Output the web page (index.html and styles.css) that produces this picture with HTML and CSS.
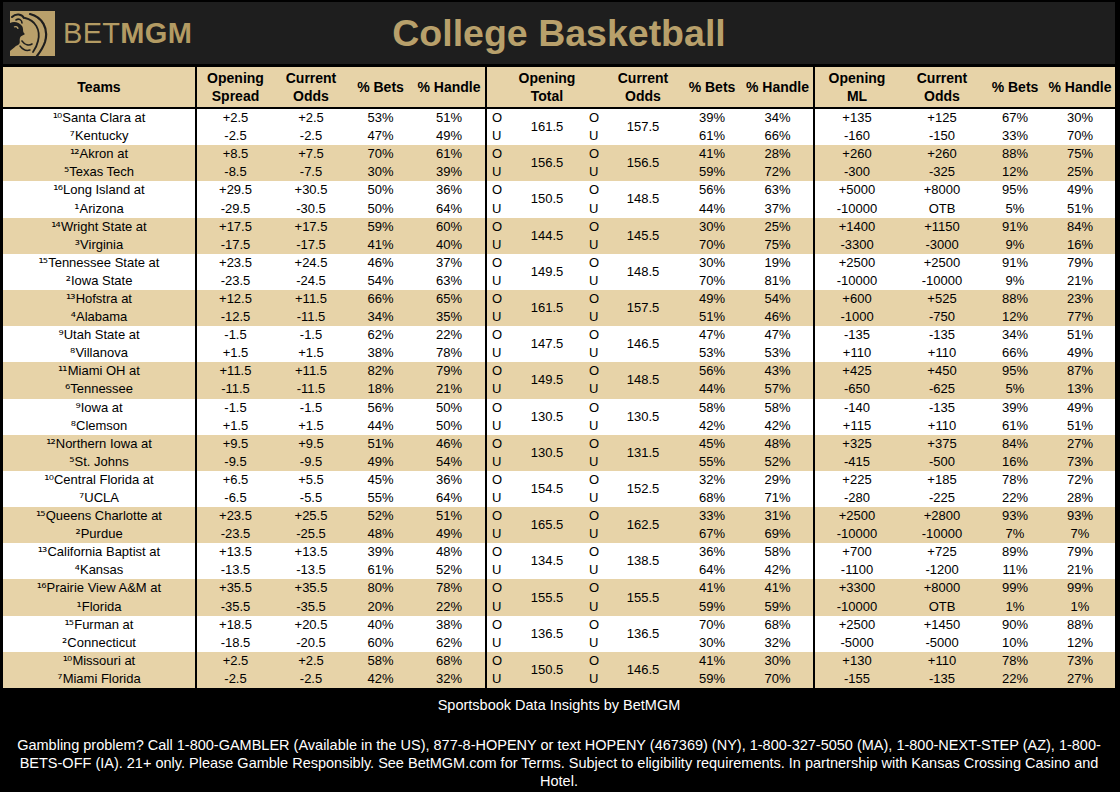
FILE: index.html
```html
<!DOCTYPE html>
<html lang="en">
<head>
<meta charset="utf-8">
<title>College Basketball - BetMGM</title>
<link rel="stylesheet" href="styles.css">
</head>
<body>
<div class="page">
  <header class="topbar">
    <div class="brand">
      <svg class="lion" width="45" height="45" viewBox="0 0 45 45" aria-hidden="true">
        <rect x="0" y="0" width="45" height="45" fill="#b9a06b"/>
        <g fill="none" stroke="#1e1e1e" stroke-linecap="round">
          <path d="M20 3 C32 6 39 17 35 31 C33 37 30 41 27 45" stroke-width="2.2"/>
          <path d="M15 7 C25 9 31 19 28 30 C27 35 25 38 23 41" stroke-width="1.8"/>
          <path d="M2 6 C6 2 12 3 14 7" stroke-width="2"/>
          <path d="M6 9 C9 7 12 9 12 12" stroke-width="1.6"/>
          <path d="M12 30 C15 34 19 35 22 33" stroke-width="1.6"/>
          <path d="M10 35 C13 39 17 40 20 39" stroke-width="1.4"/>
        </g>
        <path d="M0 12 C4 10 9 11 12 15 C14 18 12 21 15 23 C13 25 11 24 10 27 C9 30 11 32 8 34 C5 35 3 38 0 40 Z" fill="#1e1e1e"/>
        <path d="M4 16 C6 15 8 16 8 18" fill="none" stroke="#b9a06b" stroke-width="1.2"/>
      </svg>
      <div class="wordmark"><span class="bet">BET</span><span class="mgm">MGM</span></div>
    </div>
    <h1 class="title">College Basketball</h1>
    <div class="spacer"></div>
  </header>

  <table class="grid">
    <colgroup>
      <col style="width:194px"><col style="width:77px"><col style="width:74px"><col style="width:65px"><col style="width:74px">
      <col style="width:21px"><col style="width:78px"><col style="width:18px"><col style="width:78px"><col style="width:60px"><col style="width:73px">
      <col style="width:84px"><col style="width:86px"><col style="width:60px"><col style="width:70px">
    </colgroup>
    <thead>
      <tr>
        <th class="sep">Teams</th>
        <th>Opening<br>Spread</th><th>Current<br>Odds</th><th>% Bets</th><th class="sep">% Handle</th>
        <th></th><th>Opening<br>Total</th><th></th><th>Current<br>Odds</th><th>% Bets</th><th class="sep">% Handle</th>
        <th>Opening<br>ML</th><th>Current<br>Odds</th><th>% Bets</th><th>% Handle</th>
      </tr>
    </thead>
    <tbody>
      <tr class="w"><td class="sep"><span class="seed">¹⁰</span>Santa Clara at</td><td>+2.5</td><td>+2.5</td><td>53%</td><td class="sep">51%</td><td class="ou">O</td><td rowspan="2">161.5</td><td class="ou2">O</td><td rowspan="2">157.5</td><td>39%</td><td class="sep">34%</td><td>+135</td><td>+125</td><td>67%</td><td>30%</td></tr>
      <tr class="w"><td class="sep"><span class="seed">⁷</span>Kentucky</td><td>-2.5</td><td>-2.5</td><td>47%</td><td class="sep">49%</td><td class="ou">U</td><td class="ou2">U</td><td>61%</td><td class="sep">66%</td><td>-160</td><td>-150</td><td>33%</td><td>70%</td></tr>

      <tr class="t"><td class="sep"><span class="seed">¹²</span>Akron at</td><td>+8.5</td><td>+7.5</td><td>70%</td><td class="sep">61%</td><td class="ou">O</td><td rowspan="2">156.5</td><td class="ou2">O</td><td rowspan="2">156.5</td><td>41%</td><td class="sep">28%</td><td>+260</td><td>+260</td><td>88%</td><td>75%</td></tr>
      <tr class="t"><td class="sep"><span class="seed">⁵</span>Texas Tech</td><td>-8.5</td><td>-7.5</td><td>30%</td><td class="sep">39%</td><td class="ou">U</td><td class="ou2">U</td><td>59%</td><td class="sep">72%</td><td>-300</td><td>-325</td><td>12%</td><td>25%</td></tr>

      <tr class="w"><td class="sep"><span class="seed">¹⁶</span>Long Island at</td><td>+29.5</td><td>+30.5</td><td>50%</td><td class="sep">36%</td><td class="ou">O</td><td rowspan="2">150.5</td><td class="ou2">O</td><td rowspan="2">148.5</td><td>56%</td><td class="sep">63%</td><td>+5000</td><td>+8000</td><td>95%</td><td>49%</td></tr>
      <tr class="w"><td class="sep"><span class="seed">¹</span>Arizona</td><td>-29.5</td><td>-30.5</td><td>50%</td><td class="sep">64%</td><td class="ou">U</td><td class="ou2">U</td><td>44%</td><td class="sep">37%</td><td>-10000</td><td>OTB</td><td>5%</td><td>51%</td></tr>

      <tr class="t"><td class="sep"><span class="seed">¹⁴</span>Wright State at</td><td>+17.5</td><td>+17.5</td><td>59%</td><td class="sep">60%</td><td class="ou">O</td><td rowspan="2">144.5</td><td class="ou2">O</td><td rowspan="2">145.5</td><td>30%</td><td class="sep">25%</td><td>+1400</td><td>+1150</td><td>91%</td><td>84%</td></tr>
      <tr class="t"><td class="sep"><span class="seed">³</span>Virginia</td><td>-17.5</td><td>-17.5</td><td>41%</td><td class="sep">40%</td><td class="ou">U</td><td class="ou2">U</td><td>70%</td><td class="sep">75%</td><td>-3300</td><td>-3000</td><td>9%</td><td>16%</td></tr>

      <tr class="w"><td class="sep"><span class="seed">¹⁵</span>Tennessee State at</td><td>+23.5</td><td>+24.5</td><td>46%</td><td class="sep">37%</td><td class="ou">O</td><td rowspan="2">149.5</td><td class="ou2">O</td><td rowspan="2">148.5</td><td>30%</td><td class="sep">19%</td><td>+2500</td><td>+2500</td><td>91%</td><td>79%</td></tr>
      <tr class="w"><td class="sep"><span class="seed">²</span>Iowa State</td><td>-23.5</td><td>-24.5</td><td>54%</td><td class="sep">63%</td><td class="ou">U</td><td class="ou2">U</td><td>70%</td><td class="sep">81%</td><td>-10000</td><td>-10000</td><td>9%</td><td>21%</td></tr>

      <tr class="t"><td class="sep"><span class="seed">¹³</span>Hofstra at</td><td>+12.5</td><td>+11.5</td><td>66%</td><td class="sep">65%</td><td class="ou">O</td><td rowspan="2">161.5</td><td class="ou2">O</td><td rowspan="2">157.5</td><td>49%</td><td class="sep">54%</td><td>+600</td><td>+525</td><td>88%</td><td>23%</td></tr>
      <tr class="t"><td class="sep"><span class="seed">⁴</span>Alabama</td><td>-12.5</td><td>-11.5</td><td>34%</td><td class="sep">35%</td><td class="ou">U</td><td class="ou2">U</td><td>51%</td><td class="sep">46%</td><td>-1000</td><td>-750</td><td>12%</td><td>77%</td></tr>

      <tr class="w"><td class="sep"><span class="seed">⁹</span>Utah State at</td><td>-1.5</td><td>-1.5</td><td>62%</td><td class="sep">22%</td><td class="ou">O</td><td rowspan="2">147.5</td><td class="ou2">O</td><td rowspan="2">146.5</td><td>47%</td><td class="sep">47%</td><td>-135</td><td>-135</td><td>34%</td><td>51%</td></tr>
      <tr class="w"><td class="sep"><span class="seed">⁸</span>Villanova</td><td>+1.5</td><td>+1.5</td><td>38%</td><td class="sep">78%</td><td class="ou">U</td><td class="ou2">U</td><td>53%</td><td class="sep">53%</td><td>+110</td><td>+110</td><td>66%</td><td>49%</td></tr>

      <tr class="t"><td class="sep"><span class="seed">¹¹</span>Miami OH at</td><td>+11.5</td><td>+11.5</td><td>82%</td><td class="sep">79%</td><td class="ou">O</td><td rowspan="2">149.5</td><td class="ou2">O</td><td rowspan="2">148.5</td><td>56%</td><td class="sep">43%</td><td>+425</td><td>+450</td><td>95%</td><td>87%</td></tr>
      <tr class="t"><td class="sep"><span class="seed">⁶</span>Tennessee</td><td>-11.5</td><td>-11.5</td><td>18%</td><td class="sep">21%</td><td class="ou">U</td><td class="ou2">U</td><td>44%</td><td class="sep">57%</td><td>-650</td><td>-625</td><td>5%</td><td>13%</td></tr>

      <tr class="w"><td class="sep"><span class="seed">⁹</span>Iowa at</td><td>-1.5</td><td>-1.5</td><td>56%</td><td class="sep">50%</td><td class="ou">O</td><td rowspan="2">130.5</td><td class="ou2">O</td><td rowspan="2">130.5</td><td>58%</td><td class="sep">58%</td><td>-140</td><td>-135</td><td>39%</td><td>49%</td></tr>
      <tr class="w"><td class="sep"><span class="seed">⁸</span>Clemson</td><td>+1.5</td><td>+1.5</td><td>44%</td><td class="sep">50%</td><td class="ou">U</td><td class="ou2">U</td><td>42%</td><td class="sep">42%</td><td>+115</td><td>+110</td><td>61%</td><td>51%</td></tr>

      <tr class="t"><td class="sep"><span class="seed">¹²</span>Northern Iowa at</td><td>+9.5</td><td>+9.5</td><td>51%</td><td class="sep">46%</td><td class="ou">O</td><td rowspan="2">130.5</td><td class="ou2">O</td><td rowspan="2">131.5</td><td>45%</td><td class="sep">48%</td><td>+325</td><td>+375</td><td>84%</td><td>27%</td></tr>
      <tr class="t"><td class="sep"><span class="seed">⁵</span>St. Johns</td><td>-9.5</td><td>-9.5</td><td>49%</td><td class="sep">54%</td><td class="ou">U</td><td class="ou2">U</td><td>55%</td><td class="sep">52%</td><td>-415</td><td>-500</td><td>16%</td><td>73%</td></tr>

      <tr class="w"><td class="sep"><span class="seed">¹⁰</span>Central Florida at</td><td>+6.5</td><td>+5.5</td><td>45%</td><td class="sep">36%</td><td class="ou">O</td><td rowspan="2">154.5</td><td class="ou2">O</td><td rowspan="2">152.5</td><td>32%</td><td class="sep">29%</td><td>+225</td><td>+185</td><td>78%</td><td>72%</td></tr>
      <tr class="w"><td class="sep"><span class="seed">⁷</span>UCLA</td><td>-6.5</td><td>-5.5</td><td>55%</td><td class="sep">64%</td><td class="ou">U</td><td class="ou2">U</td><td>68%</td><td class="sep">71%</td><td>-280</td><td>-225</td><td>22%</td><td>28%</td></tr>

      <tr class="t"><td class="sep"><span class="seed">¹⁵</span>Queens Charlotte at</td><td>+23.5</td><td>+25.5</td><td>52%</td><td class="sep">51%</td><td class="ou">O</td><td rowspan="2">165.5</td><td class="ou2">O</td><td rowspan="2">162.5</td><td>33%</td><td class="sep">31%</td><td>+2500</td><td>+2800</td><td>93%</td><td>93%</td></tr>
      <tr class="t"><td class="sep"><span class="seed">²</span>Purdue</td><td>-23.5</td><td>-25.5</td><td>48%</td><td class="sep">49%</td><td class="ou">U</td><td class="ou2">U</td><td>67%</td><td class="sep">69%</td><td>-10000</td><td>-10000</td><td>7%</td><td>7%</td></tr>

      <tr class="w"><td class="sep"><span class="seed">¹³</span>California Baptist at</td><td>+13.5</td><td>+13.5</td><td>39%</td><td class="sep">48%</td><td class="ou">O</td><td rowspan="2">134.5</td><td class="ou2">O</td><td rowspan="2">138.5</td><td>36%</td><td class="sep">58%</td><td>+700</td><td>+725</td><td>89%</td><td>79%</td></tr>
      <tr class="w"><td class="sep"><span class="seed">⁴</span>Kansas</td><td>-13.5</td><td>-13.5</td><td>61%</td><td class="sep">52%</td><td class="ou">U</td><td class="ou2">U</td><td>64%</td><td class="sep">42%</td><td>-1100</td><td>-1200</td><td>11%</td><td>21%</td></tr>

      <tr class="t"><td class="sep"><span class="seed">¹⁶</span>Prairie View A&amp;M at</td><td>+35.5</td><td>+35.5</td><td>80%</td><td class="sep">78%</td><td class="ou">O</td><td rowspan="2">155.5</td><td class="ou2">O</td><td rowspan="2">155.5</td><td>41%</td><td class="sep">41%</td><td>+3300</td><td>+8000</td><td>99%</td><td>99%</td></tr>
      <tr class="t"><td class="sep"><span class="seed">¹</span>Florida</td><td>-35.5</td><td>-35.5</td><td>20%</td><td class="sep">22%</td><td class="ou">U</td><td class="ou2">U</td><td>59%</td><td class="sep">59%</td><td>-10000</td><td>OTB</td><td>1%</td><td>1%</td></tr>

      <tr class="w"><td class="sep"><span class="seed">¹⁵</span>Furman at</td><td>+18.5</td><td>+20.5</td><td>40%</td><td class="sep">38%</td><td class="ou">O</td><td rowspan="2">136.5</td><td class="ou2">O</td><td rowspan="2">136.5</td><td>70%</td><td class="sep">68%</td><td>+2500</td><td>+1450</td><td>90%</td><td>88%</td></tr>
      <tr class="w"><td class="sep"><span class="seed">²</span>Connecticut</td><td>-18.5</td><td>-20.5</td><td>60%</td><td class="sep">62%</td><td class="ou">U</td><td class="ou2">U</td><td>30%</td><td class="sep">32%</td><td>-5000</td><td>-5000</td><td>10%</td><td>12%</td></tr>

      <tr class="t"><td class="sep"><span class="seed">¹⁰</span>Missouri at</td><td>+2.5</td><td>+2.5</td><td>58%</td><td class="sep">68%</td><td class="ou">O</td><td rowspan="2">150.5</td><td class="ou2">O</td><td rowspan="2">146.5</td><td>41%</td><td class="sep">30%</td><td>+130</td><td>+110</td><td>78%</td><td>73%</td></tr>
      <tr class="t"><td class="sep"><span class="seed">⁷</span>Miami Florida</td><td>-2.5</td><td>-2.5</td><td>42%</td><td class="sep">32%</td><td class="ou">U</td><td class="ou2">U</td><td>59%</td><td class="sep">70%</td><td>-155</td><td>-135</td><td>22%</td><td>27%</td></tr>
    </tbody>
  </table>

  <footer class="foot">
    <p class="credit">Sportsbook Data Insights by BetMGM</p>
    <p class="disclaimer">Gambling problem? Call 1-800-GAMBLER (Available in the US), 877-8-HOPENY or text HOPENY (467369) (NY), 1-800-327-5050 (MA), 1-800-NEXT-STEP (AZ), 1-800-BETS-OFF (IA). 21+ only. Please Gamble Responsibly. See BetMGM.com for Terms. Subject to eligibility requirements. In partnership with Kansas Crossing Casino and Hotel.</p>
  </footer>
</div>
</body>
</html>
```

FILE: styles.css
```css
* { box-sizing: border-box; }

body {
  margin: 0;
  background: #000;
  font-family: "Liberation Sans", Arial, sans-serif;
}

.page {
  width: 1120px;
  height: 792px;
  background: #000;
  padding: 2px 5px 0 3px;
  overflow: hidden;
}

.topbar {
  height: 62px;
  background: #1e1e1e;
  display: grid;
  grid-template-columns: 1fr auto 1fr;
  align-items: center;
  margin-bottom: 3px;
}

.brand {
  display: flex;
  align-items: center;
  gap: 8px;
  padding-left: 7px;
  padding-top: 1px;
}

.lion { display: block; }

.wordmark {
  font-size: 29px;
  line-height: 1;
  color: #b39b63;
  letter-spacing: 0.3px;
}
.wordmark .bet { font-weight: 400; }
.wordmark .mgm { font-weight: 700; }

.title {
  margin: 0;
  font-size: 37.5px;
  line-height: 1;
  font-weight: 700;
  color: #b8a06b;
  padding-top: 2px;
}

.grid {
  width: 1112px;
  border-collapse: separate;
  border-spacing: 0;
  table-layout: fixed;
  font-size: 13px;
  color: #000;
}

.grid th {
  background: #e7d3a8;
  font-weight: 700;
  font-size: 14px;
  line-height: 18px;
  padding: 2px 0;
  border-bottom: 2px solid #000;
  vertical-align: middle;
  text-align: center;
  white-space: nowrap;
}

.grid td {
  height: 18.1px;
  line-height: 18px;
  padding: 0;
  text-align: center;
  vertical-align: middle;
  white-space: nowrap;
}

.grid tr.w td { background: #fff; }
.grid tr.t td { background: #e7d3a8; }

.grid .sep { border-right: 2px solid #000; }

.grid td.ou { text-align: left; padding-left: 5px; }
.grid td.ou2 { text-align: left; padding-left: 3px; }

.seed {
  font-family: "DejaVu Sans", "Liberation Sans", sans-serif;
  font-size: 13px;
  letter-spacing: -0.9px;
  margin-right: 1px;
}

.foot {
  color: #fff;
  text-align: center;
  padding: 8px 8px 0;
}

.credit {
  margin: 0 0 22px;
  font-size: 14.5px;
  line-height: 18px;
}

.disclaimer {
  margin: 0;
  font-size: 14.5px;
  line-height: 18px;
}
```
